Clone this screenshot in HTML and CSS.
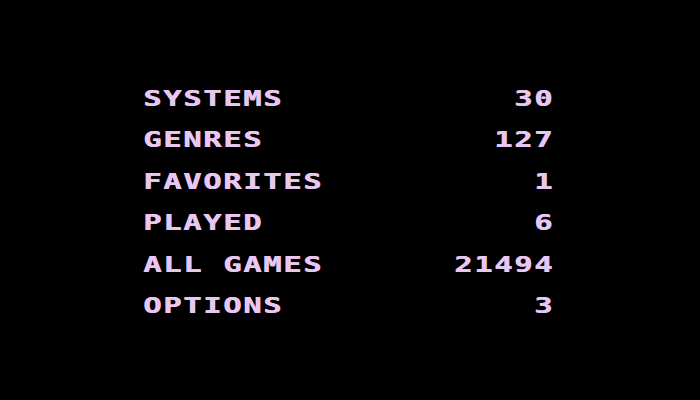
FILE: index.html
```html
<!DOCTYPE html>
<html>
<head>
<meta charset="utf-8">
<link rel="stylesheet" href="styles.css">
</head>
<body>
<div class="menu">
  <div class="row"><span class="label">SYSTEMS</span><span class="count">30</span></div>
  <div class="row"><span class="label">GENRES</span><span class="count">127</span></div>
  <div class="row"><span class="label">FAVORITES</span><span class="count">1</span></div>
  <div class="row"><span class="label">PLAYED</span><span class="count">6</span></div>
  <div class="row"><span class="label">ALL GAMES</span><span class="count">21494</span></div>
  <div class="row"><span class="label">OPTIONS</span><span class="count">3</span></div>
</div>
</body>
</html>
```
FILE: styles.css
```css
html, body {
  margin: 0;
  padding: 0;
  background: #000;
}
body {
  width: 700px;
  height: 400px;
  overflow: hidden;
}
.menu {
  margin-left: 143px;
  padding-top: 78.5px;
  width: 282.3px;
  transform: scaleX(1.45);
  transform-origin: 0 0;
  font-family: "DejaVu Sans Mono", monospace;
  font-weight: bold;
  font-size: 21px;
  letter-spacing: 1.15px;
  color: #e8c8f2;
  text-shadow: 0.5px 0 0 #e8c8f2;
}
.row {
  display: flex;
  justify-content: space-between;
  height: 41.6px;
  line-height: 41.6px;
  white-space: pre;
}
.count {
  margin-right: -1.15px;
}
```
